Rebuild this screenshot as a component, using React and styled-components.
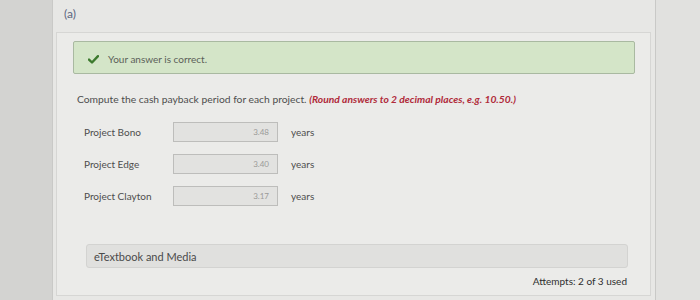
import styled, { createGlobalStyle } from "styled-components";

const GlobalStyle = createGlobalStyle`
    html, body {
        margin: 0;
        padding: 0;
        background: #d5d5d3;
        font-family: Lato, "Open Sans", sans-serif;
    }
`;

const projects = [
    { name: "Project Bono", value: "3.48" },
    { name: "Project Edge", value: "3.40" },
    { name: "Project Clayton", value: "3.17" },
];

export default function App(){
    return(
        <>
            <GlobalStyle />
            <Page>
                <SideStrip />
                <Panel>
                    <PartHeader>(a)</PartHeader>
                    <Card>
                        <CorrectBox>
                            <svg width="11" height="9" viewBox="0 0 11 9">
                                <path d="M1 4.6 L4 7.5 L10 1.2" fill="none" stroke="#3d7a2e" strokeWidth="2.4" strokeLinecap="round" strokeLinejoin="round"/>
                            </svg>
                            <span>Your answer is correct.</span>
                        </CorrectBox>
                        <Prompt>
                            Compute the cash payback period for each project. <Hint>(Round answers to 2 decimal places, e.g. 10.50.)</Hint>
                        </Prompt>
                        <Rows>
                            {projects.map((p) => (
                                <Row key={p.name}>
                                    <Label>{p.name}</Label>
                                    <AnswerBox>{p.value}</AnswerBox>
                                    <Unit>years</Unit>
                                </Row>
                            ))}
                        </Rows>
                        <MediaBar>eTextbook and Media</MediaBar>
                        <Attempts>Attempts: 2 of 3 used</Attempts>
                    </Card>
                </Panel>
                <SideStrip $right />
            </Page>
        </>
    );
}

const Page = styled.div`
    display: flex;
    width: 700px;
    height: 300px;
    overflow: hidden;
`;

const SideStrip = styled.div`
    width: ${(p) => (p.$right ? "44px" : "52px")};
    flex-shrink: 0;
    background: ${(p) => (p.$right ? "#e1e1df" : "#d3d3d1")};
    border-${(p) => (p.$right ? "left" : "right")}: 1px solid #c9c9c7;
`;

const Panel = styled.div`
    flex: 1;
    background: #e7e7e5;
    display: flex;
    flex-direction: column;
    padding: 0 4px 0 3px;
`;

const PartHeader = styled.div`
    height: 32px;
    padding: 6px 0 0 8px;
    box-sizing: border-box;
    font-size: 12px;
    color: #5c6680;
`;

const Card = styled.div`
    flex: 1;
    background: #ebebe9;
    border: 1px solid #d6d6d4;
    margin-bottom: 4px;
    padding: 8px 15px 0 16px;
    display: flex;
    flex-direction: column;
`;

const CorrectBox = styled.div`
    height: 33px;
    box-sizing: border-box;
    background: #d4e5c8;
    border: 1px solid #a9b9a1;
    border-radius: 2px;
    display: flex;
    align-items: center;
    padding: 3px 0 0 14px;
    gap: 9px;
    font-size: 10px;
    color: #5b5f58;
`;

const Prompt = styled.div`
    margin-top: 19px;
    padding-left: 4px;
    font-size: 10.3px;
    color: #4e4e4e;
`;

const Hint = styled.span`
    color: #b02a3a;
    font-weight: 700;
    font-style: italic;
`;

const Rows = styled.div`
    display: flex;
    flex-direction: column;
    gap: 12px;
    margin-top: 17px;
    padding-left: 11px;
`;

const Row = styled.div`
    display: flex;
    align-items: center;
    height: 20px;
`;

const Label = styled.div`
    width: 89px;
    font-size: 10px;
    color: #4d4d4d;
`;

const AnswerBox = styled.div`
    width: 105px;
    height: 20px;
    box-sizing: border-box;
    background: #e2e2e0;
    border: 1px solid #bdbdbb;
    font-size: 8px;
    color: #9a9a98;
    display: flex;
    align-items: center;
    justify-content: flex-end;
    padding-right: 8px;
`;

const Unit = styled.div`
    margin-left: 13px;
    font-size: 10px;
    color: #4d4d4d;
`;

const MediaBar = styled.div`
    margin: 38px 7px 0 13px;
    height: 24px;
    box-sizing: border-box;
    background: #e0e0de;
    border: 1px solid #d3d3d1;
    border-radius: 3px;
    display: flex;
    align-items: center;
    padding-left: 7px;
    font-size: 11px;
    color: #4a4a4a;
`;

const Attempts = styled.div`
    align-self: flex-end;
    margin: 7px 8px 0 0;
    font-size: 10px;
    color: #2e2e2e;
`;
